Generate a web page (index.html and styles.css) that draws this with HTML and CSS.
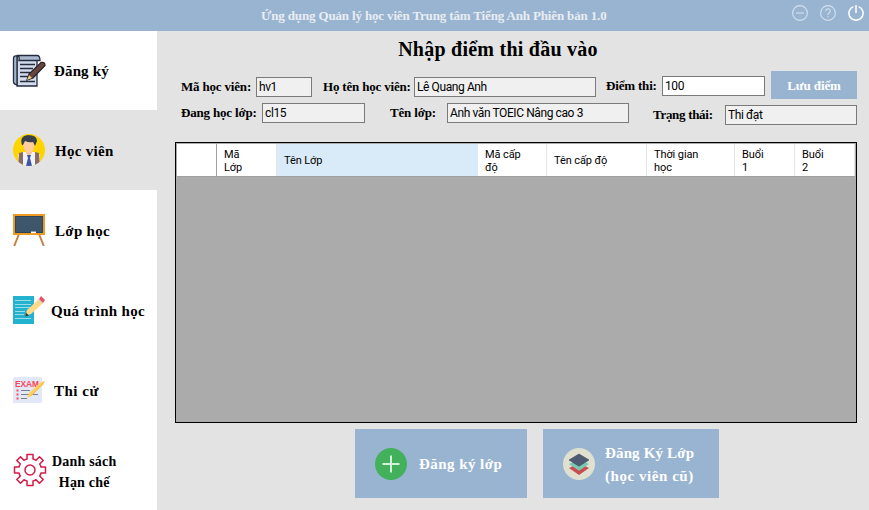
FILE: index.html
```html
<!DOCTYPE html>
<html lang="vi">
<head>
<meta charset="utf-8">
<title>Quản lý học viên</title>
<link rel="stylesheet" href="styles.css">
</head>
<body>
<div class="app">
  <header class="titlebar">
    <span class="app-title">Ứng dụng Quản lý học viên Trung tâm Tiếng Anh Phiên bản 1.0</span>
    <div class="window-tools">
      <svg width="16" height="16" viewBox="0 0 16 16" class="tool"><circle cx="8" cy="8" r="7.4"/><path d="M4 8h8"/></svg>
      <svg width="16" height="16" viewBox="0 0 16 16" class="tool"><circle cx="8" cy="8" r="7.4"/><path d="M5.800 6.200C5.800 3 10.400 3 10.300 6C10.200 7.700 8 7.500 8 10M8 11.300v1.200"/></svg>
      <svg width="16" height="16" viewBox="0 0 16 16" class="tool power"><path d="M5.300 1.600A7.100 7.100 0 1 0 10.700 1.600M8 0v8"/></svg>
    </div>
  </header>
  <nav class="sidebar">
    <a class="item register">
      <svg width="34" height="34" viewBox="0 0 34 34"><path d="M5 2h20v30H5z" fill="#d3dcef" stroke="#252c3b" stroke-width="1.300"/><path d="M5 2Q1 1 1.500 6v22q0 2 3.500 3z" fill="#a6b4d0" stroke="#252c3b" stroke-width="1.300"/><path d="M5 1.500h20q3 0 3 5H7Q8 2 5 1.500z" fill="#aab7cf" stroke="#252c3b" stroke-width="1.300"/><path d="M8 10.500h15M8 14.500h13M8 18.500h10M8 22.500h8M8 27.500h15" stroke="#252c3b" stroke-width="1.500"/><path d="M15 26l2-6L29 8.500q4-1 4 3L21 24z" fill="#66453f" stroke="#2b2526" stroke-width="1.300"/><path d="M15 26l2-5 3 3z" fill="#efc681"/></svg>
      <span>Đăng ký</span>
    </a>
    <a class="item student active">
      <svg width="32" height="32" viewBox="0 0 32 32"><defs><clipPath id="avatar"><circle cx="16" cy="16" r="16"/></clipPath></defs><g clip-path="url(#avatar)"><path fill="#ffd400" d="M0 0h32v32H0z"/><path fill="#edf3f8" d="M5 32V21q1-2 6-3h10q5 1 6 3v11z"/><path fill="#8b6b5e" d="M6 19l4-1v14H5zM22 18l4 1 1 13h-5z"/><path fill="#f4bd91" d="M13 15h6v4l-3 3-3-3z"/><path fill="#3d56a6" d="M14 21h4l-1 3 2 8h-6l2-8z"/><path fill="#ffce9e" d="M10 8q0-4 6-4t6 4q0 9-6 12-6-3-6-12"/><path fill="#37414e" d="M9 11Q6 2 15 1q9 0 9 6l-2 5-2-4q-4 1-8-1l-2 4z"/></g></svg>
      <span>Học viên</span>
    </a>
    <a class="item classes">
      <svg width="32" height="32" viewBox="0 0 32 32"><path d="M6 20L1.200 32M26 20l4.800 12" stroke="#c58247" stroke-width="2"/><path d="M1 1h30v19H1z" fill="#3d566b" stroke="#ee9b24" stroke-width="2"/><path d="M2.500 2.500h27v16h-27z" fill="none" stroke="#2d465b"/><path d="M18 18.300h5" stroke="#fff" stroke-width="1.500"/></svg>
      <span>Lớp học</span>
    </a>
    <a class="item progress">
      <svg width="32" height="28" viewBox="0 0 32 28"><path fill="#23b3ce" d="M0 0h21v28H0z"/><path d="M2 4.500h16M2 8.500h16M2 11.500h16M2 15.500h10M2 18.500h9M2 22.500h16" stroke="#9bdce9"/><path fill="#ffd985" d="M12 20l2-6L26 3l4 4-12 11z"/><path fill="#344" d="M12 20.500l1-4 3 3z"/><path fill="#e84f68" d="M26 3l2-3 4 4-2 3z"/><path d="M25.500 3.500l4 4" stroke="#bed4dc"/></svg>
      <span>Quá trình học</span>
    </a>
    <a class="item exam">
      <svg width="32" height="26" viewBox="0 0 32 26"><rect width="29" height="26" rx="1.500" fill="#e2e8f8"/><text x="2" y="9.500" textLength="24" lengthAdjust="spacingAndGlyphs" class="exam-word">EXAM</text><path d="M8 13.500h9M8 17.500h17M8 21.500h6" stroke="#777f93"/><path d="M3.500 13.500h2M3.500 17.500h2M3.500 21.500h2" stroke="#ff4857" stroke-width="2"/><path d="M14 21l2-5L28 5l4-1-2 4-12 11z" fill="#ffd15a"/><path d="M18 19L31 5" stroke="#fbb44c"/></svg>
      <span>Thi cử</span>
    </a>
    <a class="item limits">
      <svg width="34" height="34" viewBox="-17 -17 34 34" fill="none" stroke="#d71946" stroke-width="1.500"><path stroke-linejoin="round" d="M-3-15.500H3V-11Q5-10.500 6-9.700L9.500-13.200 13.200-9.500 9.700-6Q10.500-5 11-3H15.500V3H11Q10.500 5 9.700 6L13.200 9.500 9.500 13.200 6 9.700Q5 10.500 3 11V15.500H-3V11Q-5 10.500-6 9.700L-9.500 13.200-13.200 9.500-9.700 6Q-10.500 5-11 3H-15.500V-3H-11Q-10.500-5-9.700-6L-13.200-9.500-9.500-13.200-6-9.700Q-5-10.500-3-11Z"/><circle r="5"/></svg>
      <span>Danh sách<br>Hạn chế</span>
    </a>
  </nav>
  <main class="content">
    <h1>Nhập điểm thi đầu vào</h1>
    <div class="form-row first">
      <label class="l-id">Mã học viên:</label><div class="field f-id">hv1</div>
      <label class="l-name">Họ tên học viên:</label><div class="field f-name">Lê Quang Anh</div>
      <label class="l-score">Điểm thi:</label><div class="field f-score">100</div>
      <button class="save">Lưu điểm</button>
    </div>
    <div class="form-row second">
      <label class="l-class">Đang học lớp:</label><div class="field f-class">cl15</div>
      <label class="l-classname">Tên lớp:</label><div class="field f-name">Anh văn TOEIC Nâng cao 3</div>
      <label class="l-status">Trạng thái:</label><div class="field f-status">Thi đạt</div>
    </div>
    <div class="table">
      <div class="table-head">
        <div></div><div>Mã<br>Lớp</div><div class="selected">Tên Lớp</div><div>Mã cấp<br>độ</div><div>Tên cấp độ</div><div>Thời gian<br>học</div><div>Buổi<br>1</div><div>Buổi<br>2</div>
      </div>
    </div>
    <div class="actions">
      <button class="action new">
        <svg width="32" height="32" viewBox="0 0 32 32"><circle cx="16" cy="16" r="16" fill="#43b05c"/><path d="M7.500 16h17M16 7.500v17" stroke="#d4f0db" stroke-width="2"/></svg>
        <span>Đăng ký lớp</span>
      </button>
      <button class="action old">
        <svg width="32" height="32" viewBox="0 0 32 32"><circle cx="16" cy="16" r="16" fill="#e0e0d1"/><path fill="#c94d50" d="M6 20l4-2 6 4 6-4 4 2-10 7z"/><path fill="#78c8b4" d="M6 16l4-2 6 4 6-4 4 2-10 6.800z"/><path fill="#4e5b74" stroke="#3c465b" stroke-width=".6" d="M6 12l10-6 10 6-10 6.200z"/></svg>
        <span>Đăng Ký Lớp<br><span class="note">(học viên cũ)</span></span>
      </button>
    </div>
  </main>
</div>
</body>
</html>
```
FILE: styles.css
```css
* { box-sizing: border-box; }
body { margin: 0; font-family: "Liberation Serif", serif; color: #000; }
.app { display: grid; width: 869px; height: 510px; grid-template: 31px 479px / 157px 712px; background: #e3e3e3; }
.titlebar { grid-column: 1 / 3; display: flex; background: #99b4d1; color: #e8edf2; padding-left: 261px; }
.app-title { width: 531px; line-height: 32px; font-size: 13px; font-weight: bold; letter-spacing: -.15px; white-space: nowrap; }
.window-tools { display: flex; gap: 12px; padding-top: 5px; }
.tool { fill: none; stroke: #d2e1f0; stroke-width: 1.1; }
.power { stroke: #fff; stroke-width: 1.5; }
.sidebar { background: #fff; }
.item { display: flex; align-items: center; height: 80px; padding-left: 13px; font-size: 15px; font-weight: bold; letter-spacing: .3px; white-space: nowrap; }
.item:first-child { height: 79px; }
.active { background: #e3e3e3; }
.register { padding-left: 12px; gap: 8px; letter-spacing: .15px; }
.student { gap: 10px; }
.classes { gap: 10px; }
.progress { gap: 6px; }
.exam { gap: 9px; letter-spacing: .5px; }
.limits { gap: 5px; font-size: 14px; line-height: 21px; letter-spacing: .2px; text-align: center; }
.item span { padding-top: 2px; }
.limits span { padding-top: 4px; }
.exam-word { font: bold 9px "Liberation Sans", sans-serif; letter-spacing: 0; fill: #ff4455; }
.content { padding-left: 18px; }
h1 { margin: 0; width: 646px; height: 40px; text-align: center; font-size: 20px; line-height: 36px; letter-spacing: .25px; }
.form-row { display: flex; align-items: flex-start; padding-left: 6px; white-space: nowrap; }
.first { height: 32px; }
.second { height: 39px; }
label { font-size: 13px; font-weight: bold; line-height: 20px; letter-spacing: -.18px; }
.first .field, .first label { margin-top: 6px; }
.first .f-score, .first .l-score { margin-top: 5px; }
.field { height: 20px; padding: 0 2px; border: 1px solid #7a7a7a; background: #f0f0f0; font: 12px/18px Roboto, sans-serif; letter-spacing: -.4px; }
.l-id { width: 75px; }
.f-id { width: 56px; }
.l-name { width: 91px; margin-left: 11px; }
.f-name { width: 182px; }
.l-score { width: 56px; margin-left: 10px; }
.f-score { width: 103px; background: #fff; }
.l-class { width: 81px; }
.f-class { width: 103px; }
.l-classname { width: 57px; margin-left: 25px; }
.l-status { width: 72px; margin-left: 24px; letter-spacing: -.3px; }
.f-status { width: 132px; }
.second .l-status, .second .f-status { margin-top: 2px; }
button { border: 0; padding: 0; background: #99b4d1; color: #fff; font: bold 15px "Liberation Serif", serif; }
.save { width: 86px; height: 28px; padding-top: 1px; margin-left: 6px; font-size: 13px; letter-spacing: -.1px; }
.table { width: 682px; height: 281px; padding: 1px; border: 1px solid #000; background: #ababab; }
.table-head { display: grid; grid-template-columns: 40px 60px 201px 69px 100px 88px 60px 60px; height: 33px; background: #fff; border-bottom: 1px solid #a0a0a0; font: 11px/13px Roboto, sans-serif; letter-spacing: -.1px; }
.table-head div { display: flex; align-items: center; padding: 1px 0 0 7px; border-right: 1px solid #e5e5e5; white-space: nowrap; }
.table-head div:first-child { border-color: #a0a0a0; }
.table-head .selected { background: #d9ebf9; border-color: #d9ebf9; }
.actions { display: flex; gap: 16px; padding: 6px 0 0 180px; }
.action { display: flex; align-items: center; height: 69px; padding-left: 20px; text-align: left; }
.action > span { padding-top: 2px; }
.new { width: 172px; gap: 12px; letter-spacing: .45px; }
.old { width: 176px; gap: 10px; line-height: 23px; letter-spacing: .15px; }
.note { letter-spacing: .55px; }
```
